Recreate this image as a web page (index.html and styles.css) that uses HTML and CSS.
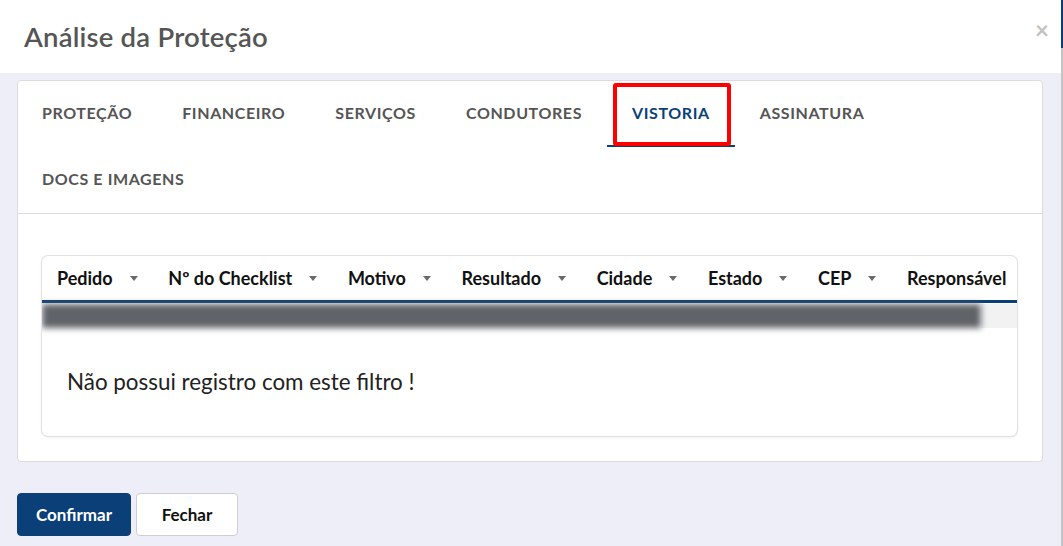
FILE: index.html
```html
<!DOCTYPE html>
<html lang="pt-BR">
<head>
    <meta charset="UTF-8">
    <meta name="viewport" content="width=device-width, initial-scale=1.0">
    <title>Análise da Proteção</title>
    <link rel="stylesheet" href="styles.css">
</head>
<body>
    <div class="window">
        <div class="modal-header">
            <h1>Análise da Proteção</h1>
            <span class="close">&times;</span>
        </div>

        <div class="modal-body">
            <div class="card">
                <!-- abas -->
                <div class="tabs">
                    <span class="tab">PROTEÇÃO</span>
                    <span class="tab">FINANCEIRO</span>
                    <span class="tab">SERVIÇOS</span>
                    <span class="tab">CONDUTORES</span>
                    <span class="tab active">VISTORIA</span>
                    <span class="tab">ASSINATURA</span>
                    <span class="tab">DOCS E IMAGENS</span>
                </div>

                <!-- conteúdo da aba vistoria -->
                <div class="tab-content">
                    <div class="grid">
                        <div class="grid-head">
                            <div class="col">Pedido <i class="caret"></i></div>
                            <div class="col">Nº do Checklist <i class="caret"></i></div>
                            <div class="col">Motivo <i class="caret"></i></div>
                            <div class="col">Resultado <i class="caret"></i></div>
                            <div class="col">Cidade <i class="caret"></i></div>
                            <div class="col">Estado <i class="caret"></i></div>
                            <div class="col">CEP <i class="caret"></i></div>
                            <div class="col">Responsável <i class="caret"></i></div>
                        </div>
                        <div class="grid-scroll">
                            <div class="scroll-thumb"></div>
                            <div class="scroll-track"></div>
                        </div>
                        <div class="grid-empty">Não possui registro com este filtro !</div>
                    </div>
                </div>
            </div>
        </div>

        <div class="modal-footer">
            <button class="btn btn-primary">Confirmar</button>
            <button class="btn btn-default">Fechar</button>
        </div>
    </div>
    <div class="edge"></div>
</body>
</html>
```

FILE: styles.css
```css
html, body {
    height: 100%;
}
body {
    margin: 0;
    display: flex;
    font-family: Lato, "Noto Sans", sans-serif;
    background-color: #eeeef8;
    color: #222;
    overflow: hidden;
}
.window {
    flex: 1;
    min-width: 0;
}
.edge {
    width: 2px;
    background: linear-gradient(#0b3f78 0, #0b3f78 48px, #c4c4c4 48px);
}
.modal-header {
    height: 73px;
    background-color: #fff;
    display: flex;
    align-items: center;
    justify-content: space-between;
    padding: 0 12px 0 24px;
}
.modal-header h1 {
    margin: 0;
    font-size: 27.5px;
    font-weight: 600;
    color: #555;
    letter-spacing: 0.2px;
}
.close {
    font-size: 24px;
    font-weight: bold;
    color: #c2c2c2;
    margin-top: -14px;
}
.modal-body {
    padding: 7px 18px 0 17px;
}
.card {
    background-color: #fff;
    border: 1px solid #dcdcdc;
    border-radius: 4px;
}
.tabs {
    display: flex;
    flex-wrap: wrap;
    border-bottom: 1px solid #dcdcdc;
    margin-left: -1px;
}
.tab {
    position: relative;
    height: 66px;
    line-height: 64px;
    padding: 0 25px;
    font-size: 16px;
    font-weight: bold;
    letter-spacing: 0.6px;
    color: #555;
    box-sizing: border-box;
}
.tab.active {
    color: #0b3f78;
    border-bottom: 2px solid #0b3f78;
}
/* destaque em volta da aba ativa */
.tab.active::after {
    content: "";
    position: absolute;
    left: 6px;
    right: 4px;
    top: 2px;
    bottom: -1px;
    border: 4px solid #ff0000;
    border-radius: 3px;
}
.tab-content {
    padding: 42px 25px 25px 24px;
}
.grid {
    border-radius: 6px;
    box-shadow: 0 0 0 1px #e2e2e2, 0 1px 3px rgba(0, 0, 0, 0.12);
    overflow: hidden;
    height: 180px;
}
.grid-head {
    display: flex;
    height: 44px;
    align-items: center;
    border-bottom: 3px solid #0b3f78;
    white-space: nowrap;
    padding-left: 15px;
}
.col {
    display: flex;
    align-items: center;
    font-size: 18px;
    font-weight: bold;
    color: #111;
    padding-right: 30.6px;
    flex-shrink: 0;
}
.caret {
    width: 0;
    height: 0;
    margin-left: 17px;
    border-left: 4px solid transparent;
    border-right: 4px solid transparent;
    border-top: 5px solid #6a6a6a;
}
.grid-scroll {
    display: flex;
    height: 24px;
    margin-top: 1px;
}
.scroll-thumb {
    flex: 1;
    background-color: #606468;
    filter: blur(3px);
}
.scroll-track {
    width: 36px;
    background-color: #f2f2f2;
}
.grid-empty {
    padding: 40px 25px;
    font-size: 22.4px;
    color: #222;
}
.modal-footer {
    padding: 31px 17px;
    display: flex;
    gap: 5px;
}
.btn {
    height: 43px;
    padding: 0;
    font-family: Lato, "Noto Sans", sans-serif;
    font-size: 17px;
    font-weight: bold;
    border-radius: 4px;
    cursor: pointer;
}
.btn-primary {
    width: 114px;
    background-color: #0b3f78;
    color: #fff;
    border: 1px solid #0b3f78;
}
.btn-default {
    width: 102px;
    background-color: #fff;
    color: #111;
    border: 1px solid #cfcfcf;
}
```
